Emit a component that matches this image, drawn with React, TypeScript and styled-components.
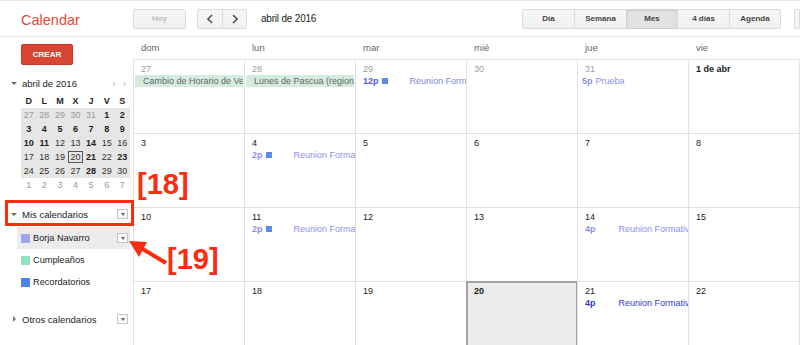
import React from "react";
import styled, { createGlobalStyle } from "styled-components";

const GlobalStyle = createGlobalStyle`
  html, body {
    margin: 0;
    padding: 0;
    background: #fff;
  }
  body {
    font-family: "Liberation Sans", Arial, Helvetica, sans-serif;
  }
`;

const RED = "#fb2c10";

const Page = styled.div`
  position: relative;
  width: 800px;
  height: 345px;
  overflow: hidden;
  display: flex;
  flex-direction: column;
`;

/* ---------- top bar ---------- */

const TopBar = styled.div`
  display: flex;
  align-items: center;
  height: 37px;
  box-sizing: border-box;
  border-top: 1px solid #e5e5e5;
  border-bottom: 1px solid #e5e5e5;
  flex-shrink: 0;
`;

const Logo = styled.div`
  width: 112px;
  padding: 2px 0 0 21px;
  font-size: 14.5px;
  color: #dd4b39;
  flex-shrink: 0;
`;

const Btn = styled.div<{ $w: number; $active?: boolean; $disabled?: boolean }>`
  display: flex;
  align-items: center;
  justify-content: center;
  box-sizing: border-box;
  width: ${(p) => p.$w}px;
  height: 20px;
  border: 1px solid ${(p) => (p.$active ? "#cfcfcf" : "#dcdcdc")};
  background: ${(p) => (p.$active ? "#e2e2e2" : "linear-gradient(#f6f6f6, #f1f1f1)")};
  box-shadow: ${(p) => (p.$active ? "inset 0 1px 2px rgba(0,0,0,0.08)" : "none")};
  color: ${(p) => (p.$disabled ? "#bdbdbd" : "#444")};
  font-size: 8px;
  font-weight: bold;
  border-radius: 2px;
  flex-shrink: 0;
`;

const BtnGroup = styled.div<{ $ml?: number }>`
  display: flex;
  margin-left: ${(p) => p.$ml ?? 0}px;
  flex-shrink: 0;

  & > * {
    border-radius: 0;
  }
  & > * + * {
    margin-left: -1px;
  }
  & > *:first-child {
    border-radius: 2px 0 0 2px;
  }
  & > *:last-child {
    border-radius: 0 2px 2px 0;
  }
`;

const DateTitle = styled.div`
  margin-left: 14px;
  font-size: 10px;
  color: #222;
  letter-spacing: -0.2px;
`;

const Spacer = styled.div`
  flex: 1;
`;

const Chevron = ({ dir }: { dir: "l" | "r" }) => (
  <svg width="6" height="10" viewBox="0 0 6 10">
    <path
      d={dir === "l" ? "M5 1 L1 5 L5 9" : "M1 1 L5 5 L1 9"}
      fill="none"
      stroke="#555"
      strokeWidth="1.6"
    />
  </svg>
);

/* ---------- layout ---------- */

const Body = styled.div`
  display: flex;
  flex: 1;
  min-height: 0;
`;

const Sidebar = styled.div`
  width: 133px;
  flex-shrink: 0;
  padding-top: 7px;
  box-sizing: border-box;
`;

const CreateBtn = styled.div`
  margin-left: 21px;
  width: 52px;
  height: 21px;
  box-sizing: border-box;
  border: 1px solid #c53727;
  border-radius: 2px;
  background: #d84532;
  color: #fff;
  font-size: 8px;
  font-weight: bold;
  display: flex;
  align-items: center;
  justify-content: center;
`;

/* ---------- mini calendar ---------- */

const MiniHead = styled.div`
  display: flex;
  align-items: center;
  height: 14px;
  margin-top: 11px;
  padding-left: 11px;
  font-size: 9.5px;
  color: #222;
`;

const Caret = styled.span<{ $right?: boolean }>`
  display: inline-block;
  width: 0;
  height: 0;
  margin-right: 5px;
  ${(p) =>
    p.$right
      ? `border-top: 3px solid transparent; border-bottom: 3px solid transparent; border-left: 3px solid #777; margin-left: 2px; margin-right: 6px;`
      : `border-left: 3px solid transparent; border-right: 3px solid transparent; border-top: 3px solid #666;`}
`;

const MiniArrows = styled.div`
  margin-left: auto;
  margin-right: 7px;
  display: flex;
  gap: 7px;
  color: #b5b5b5;
  font-size: 10px;
`;

const MiniGrid = styled.div<{ $shade?: boolean }>`
  display: grid;
  grid-template-columns: repeat(7, 1fr);
  width: 109px;
  margin-left: 21px;
  background: ${(p) => (p.$shade ? "#e6e6e6" : "transparent")};
`;

const MiniCell = styled.div<{ $tone: "head" | "bold" | "norm" | "muted" }>`
  height: 14px;
  line-height: 14px;
  text-align: center;
  font-size: 9px;
  font-weight: ${(p) => (p.$tone === "bold" || p.$tone === "head" ? "bold" : "normal")};
  color: ${(p) => (p.$tone === "muted" ? "#9a9a9a" : p.$tone === "norm" ? "#333" : "#222")};
`;

const TodayMark = styled.span`
  display: inline-block;
  border: 1px solid #555;
  line-height: 10px;
  padding: 0 1px;
  font-weight: normal;
`;

/* ---------- calendar lists ---------- */

const Section = styled.div<{ $mt: number }>`
  display: flex;
  align-items: center;
  height: 20px;
  margin-top: ${(p) => p.$mt}px;
  padding-left: 11px;
  padding-right: 5px;
  font-size: 9.5px;
  color: #222;
`;

const MenuBox = styled.span`
  margin-left: auto;
  width: 11px;
  height: 10px;
  box-sizing: border-box;
  border: 1px solid #c6c6c6;
  background: #fafafa;
  display: flex;
  align-items: center;
  justify-content: center;

  &::after {
    content: "";
    border-left: 2.5px solid transparent;
    border-right: 2.5px solid transparent;
    border-top: 3px solid #666;
  }
`;

const CalItem = styled.div<{ $selected?: boolean }>`
  display: flex;
  align-items: center;
  height: 22px;
  margin-left: 17px;
  width: 113px;
  padding: 0 2px 0 4px;
  box-sizing: border-box;
  background: ${(p) => (p.$selected ? "#ececec" : "transparent")};
  font-size: 9.2px;
  color: #222;
`;

const Swatch = styled.span<{ $color: string }>`
  width: 9px;
  height: 9px;
  background: ${(p) => p.$color};
  margin-right: 3px;
  flex-shrink: 0;
`;

/* ---------- month grid ---------- */

const MonthGrid = styled.div`
  flex: 1;
  overflow: hidden;
  display: grid;
  grid-template-columns: repeat(7, 111px);
  grid-template-rows: 22px repeat(5, 74px);
`;

const DayName = styled.div`
  padding-left: 8px;
  line-height: 22px;
  font-size: 9.5px;
  color: #666;
`;

const DayCell = styled.div<{ $today?: boolean }>`
  box-sizing: border-box;
  border-left: 1px solid #e2e2e2;
  border-top: 1px solid #e2e2e2;
  background: ${(p) => (p.$today ? "#ebebeb" : "#fff")};
  box-shadow: ${(p) => (p.$today ? "inset 0 0 0 1px #a3a3a3" : "none")};
  border-color: ${(p) => (p.$today ? "#a3a3a3" : "#e2e2e2")};
  overflow: hidden;
  padding-top: 3px;
`;

const DateNum = styled.div<{ $muted?: boolean; $bold?: boolean }>`
  padding-left: 7px;
  height: 12px;
  line-height: 12px;
  font-size: 9px;
  font-weight: ${(p) => (p.$bold ? "bold" : "normal")};
  color: ${(p) => (p.$muted ? "#9e9e9e" : "#222")};
`;

const AllDay = styled.div`
  margin: 0 1px;
  height: 12px;
  line-height: 12px;
  padding-left: 8px;
  background: #d3ecdf;
  color: #5e6a63;
  font-size: 9px;
  white-space: nowrap;
  overflow: hidden;
`;

const Strip = styled.div`
  margin: 1px 0 0 -1px;
  height: 60px;
  background: #4caf7d;
`;

const TONES = {
  past: { time: "#8b90ee", title: "#8d91ea" },
  mid: { time: "#4c58e0", title: "#7f84e2" },
  now: { time: "#2f3ac6", title: "#3440c8" },
};

type Tone = keyof typeof TONES;

const EventLine = styled.div<{ $pl: number }>`
  display: flex;
  align-items: center;
  height: 12px;
  padding-left: ${(p) => p.$pl}px;
  font-size: 9px;
  white-space: nowrap;
`;

const EvTime = styled.span<{ $tone: Tone }>`
  font-weight: bold;
  color: ${(p) => TONES[p.$tone].time};
`;

const EvSquare = styled.span`
  width: 6px;
  height: 6px;
  margin-left: 3px;
  background: #5b8be6;
  flex-shrink: 0;
`;

const EvTitle = styled.span<{ $tone: Tone; $ml: number }>`
  margin-left: ${(p) => p.$ml}px;
  color: ${(p) => TONES[p.$tone].title};
`;

/* ---------- annotations ---------- */

const MarkBox = styled.div`
  position: absolute;
  left: 5px;
  top: 200px;
  width: 129px;
  height: 26px;
  box-sizing: border-box;
  border: 3px solid ${RED};
`;

const MarkLabel = styled.div<{ $x: number; $y: number }>`
  position: absolute;
  left: ${(p) => p.$x}px;
  top: ${(p) => p.$y}px;
  font-size: 29px;
  line-height: 29px;
  font-weight: bold;
  color: ${RED};
`;

const ArrowSvg = styled.svg`
  position: absolute;
  left: 120px;
  top: 230px;
`;

/* ---------- data ---------- */

type Ev =
  | { kind: "allday"; title: string }
  | { kind: "timed"; time: string; title: string; square?: boolean; tone: Tone }
  | { kind: "inline"; time: string; title: string; tone: Tone }
  | { kind: "strip" };

type Day = { label: string; muted?: boolean; bold?: boolean; today?: boolean; events?: Ev[] };

const reunion = (time: string, tone: Tone, square = false): Ev => ({
  kind: "timed",
  time,
  title: "Reunion Formativa",
  square,
  tone,
});

const weeks: Day[][] = [
  [
    { label: "27", muted: true, events: [{ kind: "allday", title: "Cambio de Horario de Verano" }] },
    { label: "28", muted: true, events: [{ kind: "allday", title: "Lunes de Pascua (regional)" }] },
    { label: "29", muted: true, events: [reunion("12p", "mid", true)] },
    { label: "30", muted: true },
    { label: "31", muted: true, events: [{ kind: "inline", time: "5p", title: "Prueba", tone: "past" }] },
    { label: "1 de abr", bold: true },
    { label: "2" },
  ],
  [
    { label: "3" },
    { label: "4", events: [reunion("2p", "past", true)] },
    { label: "5" },
    { label: "6" },
    { label: "7" },
    { label: "8" },
    { label: "9" },
  ],
  [
    { label: "10" },
    { label: "11", events: [reunion("2p", "past", true)] },
    { label: "12" },
    { label: "13" },
    { label: "14", events: [reunion("4p", "past")] },
    { label: "15" },
    { label: "16" },
  ],
  [
    { label: "17" },
    { label: "18" },
    { label: "19" },
    { label: "20", bold: true, today: true },
    { label: "21", events: [reunion("4p", "now")] },
    { label: "22" },
    { label: "23", events: [{ kind: "strip" }] },
  ],
  [
    { label: "24" },
    { label: "25" },
    { label: "26" },
    { label: "27" },
    { label: "28" },
    { label: "29" },
    { label: "30" },
  ],
];

const dayNames = ["dom", "lun", "mar", "mié", "jue", "vie", "sáb"];

const miniWeeks = [
  [27, 28, 29, 30, 31, 1, 2],
  [3, 4, 5, 6, 7, 8, 9],
  [10, 11, 12, 13, 14, 15, 16],
  [17, 18, 19, 20, 21, 22, 23],
  [24, 25, 26, 27, 28, 29, 30],
];
const miniBold = new Set([1, 2, 3, 4, 5, 6, 7, 8, 9, 10, 11, 14, 21, 23, 28]);

const EventView = ({ ev }: { ev: Ev }) => {
  if (ev.kind === "allday") return <AllDay>{ev.title}</AllDay>;
  if (ev.kind === "strip") return <Strip />;
  if (ev.kind === "inline")
    return (
      <EventLine $pl={4}>
        <EvTime $tone={ev.tone}>{ev.time}</EvTime>
        <EvTitle $tone={ev.tone} $ml={3}>
          {ev.title}
        </EvTitle>
      </EventLine>
    );
  return (
    <EventLine $pl={7}>
      <EvTime $tone={ev.tone}>{ev.time}</EvTime>
      {ev.square && <EvSquare />}
      <EvTitle $tone={ev.tone} $ml={ev.square ? 22 : 23}>
        {ev.title}
      </EvTitle>
    </EventLine>
  );
};

export default function App() {
  return (
    <Page>
      <GlobalStyle />
      <TopBar>
        <Logo>Calendar</Logo>
        <Btn $w={53} $disabled>
          Hoy
        </Btn>
        <BtnGroup $ml={11}>
          <Btn $w={26}>
            <Chevron dir="l" />
          </Btn>
          <Btn $w={25}>
            <Chevron dir="r" />
          </Btn>
        </BtnGroup>
        <DateTitle>abril de 2016</DateTitle>
        <Spacer />
        <BtnGroup>
          <Btn $w={53}>Día</Btn>
          <Btn $w={53}>Semana</Btn>
          <Btn $w={52} $active>
            Mes
          </Btn>
          <Btn $w={53}>4 días</Btn>
          <Btn $w={52}>Agenda</Btn>
        </BtnGroup>
        <BtnGroup $ml={13}>
          <Btn $w={6} />
        </BtnGroup>
      </TopBar>

      <Body>
        <Sidebar>
          <CreateBtn>CREAR</CreateBtn>

          <MiniHead>
            <Caret />
            abril de 2016
            <MiniArrows>
              <span>‹</span>
              <span>›</span>
            </MiniArrows>
          </MiniHead>
          <MiniGrid style={{ marginTop: 4 }}>
            {["D", "L", "M", "X", "J", "V", "S"].map((d) => (
              <MiniCell key={d} $tone="head">
                {d}
              </MiniCell>
            ))}
          </MiniGrid>
          <MiniGrid $shade>
            {miniWeeks.map((w, wi) =>
              w.map((n, di) => {
                const muted = wi === 0 && n > 20;
                const tone = muted ? "muted" : miniBold.has(n) ? "bold" : "norm";
                return (
                  <MiniCell key={`${wi}-${di}`} $tone={tone}>
                    {wi === 3 && n === 20 ? <TodayMark>20</TodayMark> : n}
                  </MiniCell>
                );
              })
            )}
          </MiniGrid>
          <MiniGrid>
            {[1, 2, 3, 4, 5, 6, 7].map((n) => (
              <MiniCell key={n} $tone="muted">
                {n}
              </MiniCell>
            ))}
          </MiniGrid>

          <Section $mt={12}>
            <Caret />
            Mis calendarios
            <MenuBox />
          </Section>
          <CalItem $selected style={{ marginTop: 3 }}>
            <Swatch $color="#a0a2f2" />
            Borja Navarro
            <MenuBox />
          </CalItem>
          <CalItem>
            <Swatch $color="#92e1c0" />
            Cumpleaños
          </CalItem>
          <CalItem>
            <Swatch $color="#4986e7" />
            Recordatorios
          </CalItem>

          <Section $mt={16}>
            <Caret $right />
            Otros calendarios
            <MenuBox />
          </Section>
        </Sidebar>

        <MonthGrid>
          {dayNames.map((d) => (
            <DayName key={d}>{d}</DayName>
          ))}
          {weeks.map((w, wi) =>
            w.map((day, di) => (
              <DayCell key={`${wi}-${di}`} $today={day.today}>
                <DateNum $muted={day.muted} $bold={day.bold}>
                  {day.label}
                </DateNum>
                {day.events?.map((ev, i) => (
                  <EventView key={i} ev={ev} />
                ))}
              </DayCell>
            ))
          )}
        </MonthGrid>
      </Body>

      <MarkBox />
      <MarkLabel $x={137} $y={170}>
        [18]
      </MarkLabel>
      <MarkLabel $x={167} $y={245}>
        [19]
      </MarkLabel>
      <ArrowSvg width="50" height="40" viewBox="120 230 50 40">
        <line x1="166" y1="263" x2="141" y2="248" stroke={RED} strokeWidth="4" />
        <polygon points="129,241 147,242 139,257" fill={RED} />
      </ArrowSvg>
    </Page>
  );
}
